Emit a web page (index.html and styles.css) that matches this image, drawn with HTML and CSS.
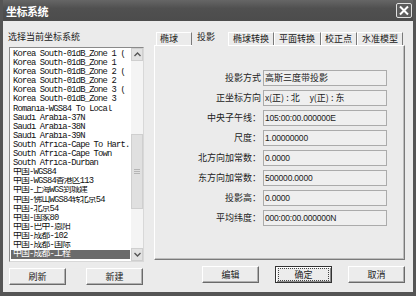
FILE: index.html
```html
<!DOCTYPE html>
<html lang="zh-CN">
<head>
    <meta charset="UTF-8">
    <title>坐标系统</title>
    <link rel="stylesheet" href="styles.css">
</head>
<body>
    <div class="window">
        <div class="titlebar">
            <span class="title">坐标系统</span>
            <span class="close">
                <svg width="12" height="11" viewBox="0 0 12 11"><path d="M2 1.5 L10 9.5 M10 1.5 L2 9.5" stroke="#fff" stroke-width="2"/></svg>
            </span>
        </div>

        <div class="dialog">
            <div class="left">
                <div class="caption">选择当前坐标系统</div>
                <div class="listbox">
                    <ul class="items">
                        <li>Korea South-01dB_Zone 1 (</li>
                        <li>Korea South-01dB_Zone 1</li>
                        <li>Korea South-01dB_Zone 2 (</li>
                        <li>Korea South-01dB_Zone 2</li>
                        <li>Korea South-01dB_Zone 3 (</li>
                        <li>Korea South-01dB_Zone 3</li>
                        <li>Romania-WGS84 To Local</li>
                        <li>Saudi Arabia-37N</li>
                        <li>Saudi Arabia-38N</li>
                        <li>Saudi Arabia-39N</li>
                        <li>South Africa-Cape To Hart.</li>
                        <li>South Africa-Cape Town</li>
                        <li>South Africa-Durban</li>
                        <li>中国-WGS84</li>
                        <li>中国-WGS84香港区113</li>
                        <li>中国-上海WGS到城建</li>
                        <li>中国-佛山WGS84转北京54</li>
                        <li>中国-北京54</li>
                        <li>中国-国家80</li>
                        <li>中国-巴中-恩阳</li>
                        <li>中国-成都-102</li>
                        <li>中国-成都-国际</li>
                        <li class="selected">中国-成都-工程</li>
                    </ul>
                    <div class="scrollbar">
                        <div class="arrow">
                            <svg width="7" height="5" viewBox="0 0 7 5"><path d="M0.5 4 L3.5 1 L6.5 4" fill="none" stroke="#555" stroke-width="1.4"/></svg>
                        </div>
                        <div class="track">
                            <div class="thumb">
                                <svg width="6" height="5" viewBox="0 0 6 5"><path d="M0 0.5 H6 M0 2.5 H6 M0 4.5 H6" stroke="#b5b5b5" stroke-width="1"/></svg>
                            </div>
                        </div>
                        <div class="arrow">
                            <svg width="7" height="5" viewBox="0 0 7 5"><path d="M0.5 1 L3.5 4 L6.5 1" fill="none" stroke="#555" stroke-width="1.4"/></svg>
                        </div>
                    </div>
                </div>
                <div class="buttons left-buttons">
                    <button class="btn">刷新</button>
                    <button class="btn">新建</button>
                </div>
            </div>

            <div class="right">
                <div class="tabs">
                    <div class="tab first">椭球</div>
                    <div class="tab active">投影</div>
                    <div class="tab">椭球转换</div>
                    <div class="tab wide">平面转换</div>
                    <div class="tab narrow">校正点</div>
                    <div class="tab">水准模型</div>
                </div>
                <div class="panel">
                    <div class="form">
                        <label>投影方式</label>
                        <div class="field">高斯三度带投影</div>
                        <label>正坐标方向</label>
                        <div class="field"><span class="num">x</span>(正) : 北 &nbsp;&nbsp;&nbsp;&nbsp;<span class="num">y</span>(正) : 东</div>
                        <label>中央子午线：</label>
                        <div class="field num">105:00:00.000000E</div>
                        <label>尺度：</label>
                        <div class="field num">1.00000000</div>
                        <label>北方向加常数：</label>
                        <div class="field num">0.0000</div>
                        <label>东方向加常数：</label>
                        <div class="field num">500000.0000</div>
                        <label>投影高：</label>
                        <div class="field num">0.0000</div>
                        <label>平均纬度：</label>
                        <div class="field num">000:00:00.000000N</div>
                    </div>
                </div>
                <div class="buttons right-buttons">
                    <button class="btn">编辑</button>
                    <button class="btn default"><span class="focus">确定</span></button>
                    <button class="btn">取消</button>
                </div>
            </div>
        </div>
    </div>
</body>
</html>
```

FILE: styles.css
```css
html, body {
    margin: 0;
    padding: 0;
}

body {
    width: 416px;
    height: 296px;
    overflow: hidden;
    font-family: "Noto Sans CJK SC", "Liberation Sans", sans-serif;
    color: #1a1a1a;
}

.window {
    width: 416px;
    height: 296px;
    box-sizing: border-box;
    background-color: #555;
    padding: 0 3px 4px 3px;
    display: flex;
    flex-direction: column;
}

.titlebar {
    height: 21px;
    display: flex;
    align-items: center;
    justify-content: space-between;
    padding: 0 1px 0 3px;
    background: linear-gradient(#666, #505050 40%, #4c4c4c);
}

.title {
    color: #fff;
    font-size: 11px;
    font-weight: bold;
    letter-spacing: -0.5px;
}

.close {
    width: 14px;
    height: 13px;
    border: 1px solid #e0e0e0;
    border-radius: 2px;
    background-color: #5c5c5c;
    display: flex;
    align-items: center;
    justify-content: center;
}

.dialog {
    flex: 1;
    background-color: #ebebeb;
    display: flex;
    padding: 0 7px 0 6px;
}

.left {
    width: 135px;
    display: flex;
    flex-direction: column;
    padding-top: 10px;
}

.caption {
    height: 12px;
    line-height: 12px;
    font-size: 9px;
    margin-left: -1px;
    margin-bottom: 4px;
}

.listbox {
    height: 215px;
    box-sizing: border-box;
    border: 1px solid #8a8a8a;
    border-right-color: #d8d8d8;
    border-bottom-color: #d8d8d8;
    background-color: #fff;
    display: flex;
}

.items {
    flex: 1;
    list-style: none;
    margin: 0;
    padding: 2px 1px 0 1px;
    overflow: hidden;
    font-family: "Liberation Mono", "Noto Sans CJK SC", monospace;
    font-size: 8.8px;
    letter-spacing: -0.8px;
    color: #111;
}

.items li {
    height: 9.1px;
    line-height: 9.1px;
    white-space: nowrap;
    padding-left: 2px;
    overflow: hidden;
}

.items li.selected {
    background-color: #6b6b6b;
    color: #fff;
}

.scrollbar {
    width: 12px;
    display: flex;
    flex-direction: column;
    background-color: #f4f4f4;
}

.arrow {
    height: 13px;
    box-sizing: border-box;
    border: 1px solid #cfcfcf;
    background-color: #e2e2e2;
    display: flex;
    align-items: center;
    justify-content: center;
}

.track {
    flex: 1;
}

.thumb {
    margin-top: 73px;
    height: 75px;
    box-sizing: border-box;
    border: 1px solid #cfcfcf;
    background-color: #e0e0e0;
    display: flex;
    align-items: center;
    justify-content: center;
}

.buttons {
    display: flex;
    margin-top: 6px;
}

.left-buttons {
    justify-content: space-between;
    padding-right: 1px;
}

.btn {
    width: 57px;
    height: 17px;
    box-sizing: border-box;
    padding: 0;
    font-family: "Noto Sans CJK SC", sans-serif;
    font-size: 9px;
    color: #1a1a1a;
    background-color: #ececec;
    border: 1px solid;
    border-color: #fff #6a6a6a #6a6a6a #fff;
    box-shadow: inset -1px -1px 0 #b0b0b0;
    display: flex;
    align-items: center;
    justify-content: center;
}

.btn.default {
    border-color: #333;
    box-shadow: inset 1px 1px 0 #fff, inset -1px -1px 0 #8a8a8a;
}

.focus {
    width: 49px;
    height: 11px;
    line-height: 11px;
    border: 1px dotted #444;
    text-align: center;
}

.right {
    flex: 1;
    margin-left: 10px;
    display: flex;
    flex-direction: column;
    padding-top: 9px;
}

.tabs {
    height: 15px;
    display: flex;
    align-items: flex-end;
    padding-left: 2px;
    position: relative;
    z-index: 1;
}

.tab {
    height: 12px;
    line-height: 12px;
    font-size: 9px;
    padding: 0 4px;
    border-top: 1px solid #fff;
    border-left: 1px solid #fff;
    border-right: 1px solid #7a7a7a;
    white-space: nowrap;
}

.tab.first {
    padding: 0 13px 0 3px;
}

.tab.wide {
    padding: 0 5px 0 4px;
}

.tab.narrow {
    padding: 0 4px 0 3px;
}

.tab.active {
    height: 15px;
    line-height: 12px;
    padding: 0 12px 0 4px;
    background-color: #ebebeb;
    border-color: #ebebeb;
    margin-bottom: -1px;
}

.panel {
    height: 215px;
    box-sizing: border-box;
    width: 251px;
    border: 1px solid;
    border-color: #fff #7a7a7a #7a7a7a #fff;
    box-shadow: inset -1px -1px 0 #bdbdbd;
    padding-top: 24px;
}

.form {
    display: grid;
    grid-template-columns: 106px 124px;
    grid-auto-rows: 16px;
    row-gap: 4px;
    column-gap: 2px;
}

.form label {
    text-align: right;
    font-size: 9px;
    line-height: 16px;
    white-space: nowrap;
    color: #222;
}

.field {
    box-sizing: border-box;
    border: 1px solid #ababab;
    background-color: #efefef;
    font-size: 9px;
    line-height: 14px;
    padding-left: 1px;
    white-space: nowrap;
    overflow: hidden;
    color: #222;
}

.num {
    font-family: "Liberation Sans", sans-serif;
    font-size: 8.5px;
    letter-spacing: -0.2px;
}

.right-buttons {
    justify-content: flex-end;
    gap: 16px;
    padding-right: 1px;
}
```
